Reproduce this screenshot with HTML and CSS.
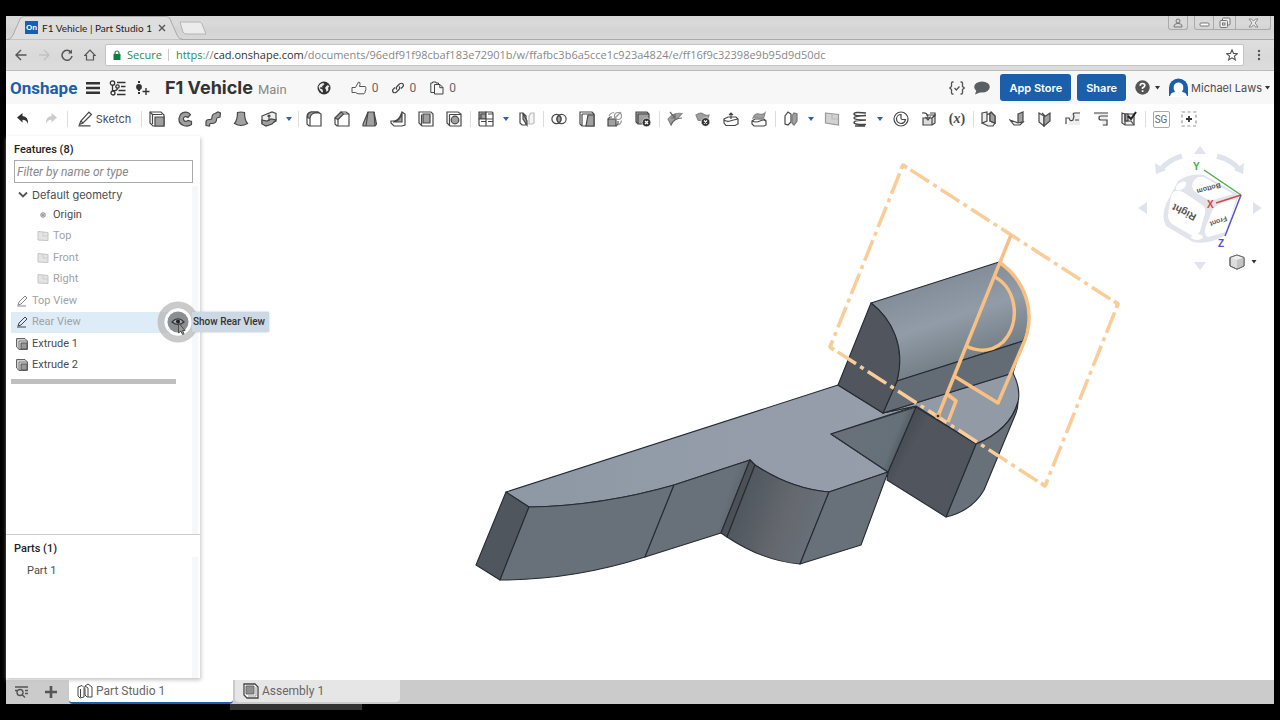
FILE: index.html
```html
<!DOCTYPE html>
<html lang="en">
<head>
<meta charset="utf-8">
<title>F1 Vehicle | Part Studio 1</title>
<link rel="stylesheet" href="styles.css">
</head>
<body>
<div class="window">
  <div class="tabstrip">
    <svg class="tab-shape" width="190" height="24" viewBox="0 0 190 24"><path d="M0 23.500H2Q5 23 7 19L14 3Q15 .5 18 .5H160Q163 .5 164 3L171 19Q173 23.500 177 23.500H190" fill="#dedede" stroke="#aaa"/></svg>
    <div class="browser-tab">
      <span class="favicon">On</span>
      <span class="tab-title">F1 Vehicle | Part Studio 1</span>
      <button class="plain tab-close" aria-label="Close tab"><svg width="8" height="8" viewBox="0 0 8 8"><path d="M1 1L7 7M7 1L1 7" stroke="#555" stroke-width="1.400"/></svg></button>
    </div>
    <button class="plain new-tab" aria-label="New tab"><svg width="28" height="14" viewBox="0 0 28 14"><path d="M1 1H20Q22 1 23 3L27 13H7Q5 13 4 11Z" fill="#ececec" stroke="#b4b4b4"/></svg></button>
    <div class="window-controls">
      <button class="plain wc wc-user" aria-label="Profile"><svg width="10" height="10" viewBox="0 0 10 10" fill="none" stroke="#777"><circle cx="5" cy="3" r="2"/><path d="M1 9V8Q1 6 4 5.500H6Q9 6 9 8V9Z"/></svg></button>
      <div class="wc-group">
        <button class="plain wc wc-min" aria-label="Minimize"><svg width="11" height="10" viewBox="0 0 11 10"><rect x="1" y="5" width="9" height="3" rx="1" fill="#fff" stroke="#777"/></svg></button>
        <button class="plain wc wc-max" aria-label="Restore"><svg width="12" height="12" viewBox="0 0 12 12" fill="#eee" stroke="#777"><rect x="3.500" y="1" width="7.500" height="7" rx="1"/><rect x="1" y="3.500" width="7.500" height="7" rx="1"/><rect x="3.500" y="6" width="2.500" height="2"/></svg></button>
        <button class="plain wc wc-close" aria-label="Close"><svg width="11" height="10" viewBox="0 0 11 10"><path d="M1 1H3.500L5.500 3.200L7.500 1H10L7 5L10 9H7.500L5.500 6.800L3.500 9H1L4 5Z" fill="#eee" stroke="#888"/></svg></button>
      </div>
    </div>
  </div>

  <div class="navbar">
    <button class="plain nav" aria-label="Back"><svg width="12" height="12" viewBox="0 0 12 12" fill="none" stroke="#555" stroke-width="1.400"><path d="M6 1L1 6L6 11M1 6H11.500"/></svg></button>
    <button class="plain nav" aria-label="Forward"><svg width="12" height="12" viewBox="0 0 12 12" fill="none" stroke="#c2c2c2" stroke-width="1.400"><path d="M6 1L11 6L6 11M11 6H1"/></svg></button>
    <button class="plain nav" aria-label="Reload"><svg width="12" height="12" viewBox="0 0 12 12" fill="none" stroke="#555" stroke-width="1.500"><path d="M10 3.200A5 5 0 1 0 11 7"/><path d="M11 .5V4.500H7Z" fill="#555" stroke="none"/></svg></button>
    <button class="plain nav" aria-label="Home"><svg width="12" height="12" viewBox="0 0 12 12" fill="none" stroke="#555" stroke-width="1.200"><path d="M.8 6.500L6 1.200L11.200 6.500H9.500V11H2.500V6.500Z"/></svg></button>
    <div class="address">
      <svg width="8" height="10" viewBox="0 0 8 10"><rect x=".5" y="4" width="7" height="6" rx=".5" fill="#0b8043"/><path d="M2 4V3A2 2 0 0 1 6 3V4" fill="none" stroke="#0b8043" stroke-width="1.200"/></svg>
      <span class="secure">Secure</span>
      <span class="url"><span class="green">https</span>://<span class="dark">cad.onshape.com</span>/documents/96edf91f98cbaf183e72901b/w/ffafbc3b6a5cce1c923a4824/e/ff16f9c32398e9b95d9d50dc</span>
      <button class="plain" aria-label="Bookmark"><svg width="12" height="12" viewBox="0 0 12 12"><path d="M6 .8L7.500 4.400L11.400 4.700L8.400 7.200L9.400 11L6 8.900L2.600 11L3.600 7.200L.6 4.700L4.500 4.400Z" fill="none" stroke="#555" stroke-width="1.100"/></svg></button>
    </div>
    <button class="plain kebab" aria-label="Browser menu"><svg width="4" height="12" viewBox="0 0 4 12" fill="#555"><circle cx="2" cy="2" r="1.200"/><circle cx="2" cy="6" r="1.200"/><circle cx="2" cy="10" r="1.200"/></svg></button>
  </div>

  <header class="header">
    <a class="logo" href="#">Onshape</a>
    <button class="plain hbtn" aria-label="Menu"><svg width="14" height="14" viewBox="0 0 14 14" stroke="#333" stroke-width="2.400"><path d="M0 2.200H14M0 7H14M0 11.800H14"/></svg></button>
    <button class="plain hbtn" aria-label="Versions"><svg width="18" height="16" viewBox="0 0 18 16" fill="none" stroke="#333" stroke-width="1.300"><circle cx="3.500" cy="3" r="2.200"/><circle cx="8.500" cy="6.500" r="1.700"/><circle cx="4" cy="13" r="2"/><path d="M3.500 5V11M4 10.500Q8.500 11 8.500 8.200M8 2.500H16.500M12 6.500H16.500M9.500 10.500H16.500M8 14.500H16.500"/></svg></button>
    <button class="plain hbtn" aria-label="Create version"><svg width="15" height="16" viewBox="0 0 15 16" fill="none" stroke="#333" stroke-width="1.400"><circle cx="4" cy="7" r="2.200" fill="#333"/><path d="M4 1V3M4 9V15" stroke-width="2" stroke-dasharray="2 1"/><path d="M11 8V15M7.500 11.500H14.500"/></svg></button>
    <h1 class="doc-name">F1 Vehicle</h1>
    <span class="branch">Main</span>
    <button class="plain globe" aria-label="Public"><svg width="14" height="14" viewBox="0 0 14 14"><circle cx="7" cy="7" r="6.500" fill="#333"/><path d="M3.500 3L6 2L7.500 3L6 4.500L5 5L5.500 6.500L3.500 6L3 7.500L5.500 8.500L6 11L5 11.500L2.500 8.500L1.500 5.500ZM9.500 5L11 4L12.500 6L11 6.500L11.500 9L9.500 11L9 8.500L8 7Z" fill="#eee"/></svg></button>
    <button class="plain stat stat-like"><svg width="16" height="14" viewBox="0 0 16 14"><path d="M1 6.500H4.500L7.500 1Q9.500 1 9 3.500L8.500 5.500H14Q15.500 6 14.800 7.500Q15.300 9 14.200 10Q14.200 12 13 12.800H7L4.500 11.500H1Z" fill="none" stroke="#555"/></svg><span>0</span></button>
    <button class="plain stat"><svg width="12" height="12" viewBox="0 0 12 12" fill="none" stroke="#444" stroke-width="1.200"><path d="M5 7.500Q3.500 6 5 4.500L7.500 2Q9.500 .5 11 2Q12 3.800 10.500 5L9 6.500M7 4.500Q8.500 6 7 7.500L4.500 10Q2.500 11.500 1 10Q0 8.200 1.500 7L3 5.500"/></svg><span>0</span></button>
    <button class="plain stat"><svg width="14" height="14" viewBox="0 0 14 14" fill="none" stroke="#444"><path d="M4.500 11.500H.8V2H2.500V1H6V2H8.500V3.500M4.500 3.500H10L13 6.500V13H4.500ZM9.800 3.500V6.700H13"/></svg><span>0</span></button>
    <div class="header-right">
      <button class="plain" aria-label="FeatureScript"><svg width="16" height="14" viewBox="0 0 16 14" fill="none" stroke="#555" stroke-width="1.300"><path d="M4.500 1H3.500Q2.500 1 2.500 2.200V5.500L.8 7L2.500 8.500V11.800Q2.500 13 3.500 13H4.500M11.500 1H12.500Q13.500 1 13.500 2.200V5.500L15.200 7L13.500 8.500V11.800Q13.500 13 12.500 13H11.500M5.500 7L7.300 9L10.500 5.500"/></svg></button>
      <button class="plain" aria-label="Comments"><svg width="16" height="14" viewBox="0 0 16 14"><ellipse cx="8" cy="6" rx="7.800" ry="5.500" fill="#5a5f63"/><path d="M2.500 9L1 13.500L7 11Z" fill="#5a5f63"/></svg></button>
      <div class="header-actions">
        <button class="primary">App Store</button>
        <button class="primary">Share</button>
      </div>
      <button class="plain menu" aria-label="Help"><svg width="15" height="15" viewBox="0 0 15 15"><circle cx="7.500" cy="7.500" r="7.200" fill="#555"/><path d="M5.200 5.800Q5.200 3.500 7.500 3.500T9.800 5.500Q9.800 7 7.600 7.800V9M7.600 10.300V12" fill="none" stroke="#fff" stroke-width="1.700"/></svg><svg class="caret" width="5" height="4" viewBox="0 0 5 4"><path d="M0 0H5L2.500 3.500Z"/></svg></button>
      <button class="plain menu user"><svg width="19" height="19" viewBox="0 0 19 19"><path d="M0 18V9.500A9.500 9 0 0 1 19 9.500V18Z" fill="#1b5faa"/><path d="M1 19Q1 14.500 6 14Q4 11 4.800 8Q5.800 4.500 9.500 4.500T14.200 8Q15 11 13 14Q18 14.500 18 19Z" fill="#fff"/></svg><span>Michael Laws</span><svg class="caret" width="5" height="4" viewBox="0 0 5 4"><path d="M0 0H5L2.500 3.500Z"/></svg></button>
    </div>
  </header>

  <div class="toolbar">
    <button class="plain tool" aria-label="Undo"><svg class="ic" viewBox="0 0 16 16"><path d="M2 6.500L7.500 2V5Q13.500 5.500 13 13Q11.500 8.800 7.500 8.800V11.500Z" fill="#333" stroke="none"/></svg></button>
    <button class="plain tool" aria-label="Redo"><svg class="ic" viewBox="0 0 16 16"><path d="M14 6.500L8.500 2V5Q2.500 5.500 3 13Q4.500 8.800 8.500 8.800V11.500Z" fill="#ccc" stroke="none"/></svg></button>
    <i class="sep"></i>
    <button class="plain sketch"><svg class="ic" viewBox="0 0 16 16"><path d="M12 1.200L14.500 3.500L6 12L2.500 13.500L3.800 10ZM3.800 10L6 12M1.500 14.800H13.500" fill="none"/></svg><span>Sketch</span></button>
    <i class="sep"></i>
    <button class="plain tool" aria-label="Extrude"><svg class="ic" viewBox="0 0 16 16"><path d="M1 1H12L15 4V15H4L1 12Z" fill="#fff"/><path d="M3.500 3.500H13M3.500 3.500V13" /><path class="g" d="M6 6H15V15H6Z"/><path d="M1 1L4 4"/></svg></button>
    <button class="plain tool" aria-label="Revolve"><svg class="ic" viewBox="0 0 16 16"><path class="g" d="M13.500 3.500L11 6.500Q8 4.500 6.500 7Q6 10 9 10.500L11 9.500L14.500 10.500V13.500Q11 16 6.500 14.500Q1.500 12.500 2 7.500Q3 1.500 8.500 1.200Q11.500 1 13.500 3.500Z"/></svg></button>
    <button class="plain tool" aria-label="Sweep"><svg class="ic" viewBox="0 0 16 16"><path class="g" d="M1 14.500V11Q1 8.500 4 8.500H5.500Q7 8.500 7 6.500Q7 3 10 2.500L13 1L15.500 2L15 6L12 7Q11.500 7 11.500 9Q11 12.500 7 12.500H5.500Q4.500 12.500 4.500 15Z"/></svg></button>
    <button class="plain tool" aria-label="Loft"><svg class="ic" viewBox="0 0 16 16"><path class="g" d="M4.500 1.500Q8 .5 11.500 1.500Q11.500 9 14.500 12.500Q8 16.500 1.500 12.500Q4.500 9 4.500 1.500Z"/></svg></button>
    <button class="plain tool" aria-label="Thicken"><svg class="ic" viewBox="0 0 16 16"><path d="M1 5L11 1L15 2.500V10L5 14.500L1 12.500Z" fill="#eee"/><path class="g" d="M1 9L6 10L10 8L15 9L11 13L5 15L1 13Z"/><path d="M8 4V10M6.500 5.500L8 4L9.500 5.500"/></svg></button>
    <i class="drop"></i><i class="sep"></i>
    <button class="plain tool" aria-label="Fillet"><svg class="ic" viewBox="0 0 16 16"><path d="M5 1H12L15 3V15H3L1 13V6Q1 1.500 5 1Z" fill="#fff"/><path class="g" d="M5 1H12L13 2H9Q4.500 2.500 4 7.500L1.500 6.500Q1.500 2 5 1Z"/><path d="M4 8V15"/></svg></button>
    <button class="plain tool" aria-label="Chamfer"><svg class="ic" viewBox="0 0 16 16"><path d="M7 1H12L15 3V15H3L1 13V7Z" fill="#fff"/><path class="g" d="M7 1L9.500 3L4 8.500L1 7Z"/><path d="M4 8.500V15M9.500 3H15"/></svg></button>
    <button class="plain tool" aria-label="Draft"><svg class="ic" viewBox="0 0 16 16"><path class="g" d="M6 1H12L14.500 13L13 15H1V13Z"/><path d="M6 1L4 15M12 1L13 15"/></svg></button>
    <button class="plain tool" aria-label="Rib"><svg class="ic" viewBox="0 0 16 16"><path d="M12 1L15 3V14L12 15H4L1 12V10H4Q9 10 12 1Z" fill="#fff"/><path class="g" d="M12 2V11H3Q10 10 12 2Z"/></svg></button>
    <button class="plain tool" aria-label="Shell"><svg class="ic" viewBox="0 0 16 16"><path d="M1 1H13L15 3V15H4L1 12Z" fill="#fff"/><path class="g" d="M5 3H12V12H5Z"/><path d="M3.500 3.500V15"/></svg></button>
    <button class="plain tool" aria-label="Hole"><svg class="ic" viewBox="0 0 16 16"><path d="M1 1H12L15 3V15H4L1 12Z" fill="#fff"/><path d="M3.500 3.500H15M3.500 3.500V15"/><circle class="g" cx="9" cy="9" r="3.800"/></svg></button>
    <i class="sep"></i>
    <button class="plain tool" aria-label="Linear pattern"><svg class="ic" viewBox="0 0 16 16"><path class="g" d="M1 1H8V8H1Z"/><path d="M8 1H14L15 2V8H8ZM1 8H8V15H2L1 14ZM8 8H15V15H8Z" fill="#fff"/><path d="M3 3H8M3 3V8M3 10.500H8M10 10.500H15M10 3H15"/></svg></button>
    <i class="drop"></i>
    <button class="plain tool" aria-label="Mirror"><svg class="ic" viewBox="0 0 16 16"><path d="M1 2H4L7 5V14H3L1 12Z" fill="#fff"/><path class="g" d="M4 2L8 10V14L4 8Z"/><path d="M15 2H12L10 5V13H13L15 12Z" fill="#f4f4f4" stroke="#bbb"/></svg></button>
    <i class="sep"></i>
    <button class="plain tool" aria-label="Boolean"><svg class="ic" viewBox="0 0 16 16"><circle cx="5.500" cy="8" r="4.600" fill="none"/><circle cx="10.500" cy="8" r="4.600" fill="none"/><path class="g" d="M8 4.200A4.600 4.600 0 0 1 8 11.800A4.600 4.600 0 0 1 8 4.200Z"/></svg></button>
    <button class="plain tool" aria-label="Split"><svg class="ic" viewBox="0 0 16 16"><path d="M1 1H13L15 3V15H3L1 13Z" fill="#fff"/><path class="g" d="M9 4H15V15H7Z"/><path d="M3 3H15M3 3V15"/></svg></button>
    <button class="plain tool" aria-label="Transform"><svg class="ic" viewBox="0 0 16 16"><path class="g" d="M1 8H9V15H1Z"/><path d="M1 8L3 6H5M9 15L11 13V10" stroke="#555"/><circle cx="11" cy="5" r="3.500" fill="none" stroke="#999"/><path d="M7 8L14 1M11 14Q14 13 14.500 9.500M2 5Q3 2 7 1.500" stroke="#999"/></svg></button>
    <button class="plain tool" aria-label="Delete part"><svg class="ic" viewBox="0 0 16 16"><path class="g" d="M1 1H12L14 3V13H3L1 11Z"/><path d="M3 3V13M3 3H14"/><circle cx="11.500" cy="11.500" r="4.300" fill="#333" stroke="#fff" stroke-width=".6"/><path d="M10 10L13 13M13 10L10 13" stroke="#fff" stroke-width="1.300"/></svg></button>
    <i class="sep"></i>
    <button class="plain tool" aria-label="Modify fillet"><svg class="ic" viewBox="0 0 16 16"><path class="l" d="M1 8Q6 1 15 2.500L11 7Q6 8 4 14Z"/><path d="M3 1L8 7M8 3V7H4M4 14Q7 7 15 7" stroke="#666"/></svg></button>
    <button class="plain tool" aria-label="Delete face"><svg class="ic" viewBox="0 0 16 16"><path class="l" d="M1 4Q6 1 8 3T14 4L12 10Q9 8 7 9T3 9Z"/><circle cx="10.500" cy="11" r="4.300" fill="#333" stroke="#fff" stroke-width=".6"/><path d="M9 9.500L12 12.500M12 9.500L9 12.500" stroke="#fff" stroke-width="1.300"/></svg></button>
    <button class="plain tool" aria-label="Move face"><svg class="ic" viewBox="0 0 16 16"><path d="M1 8L5 6H13L15 8V13L12 14.500H3L1 12Z" fill="#fff"/><path d="M1 9Q4 11 7 10T15 8M8 8V2M6 4L8 2L10 4"/></svg></button>
    <button class="plain tool" aria-label="Replace face"><svg class="ic" viewBox="0 0 16 16"><path d="M1 10L4 8H13L15 10V14L13 15H3L1 13Z" fill="#fff"/><path class="l" d="M2 7Q4 2 8 3T14 2L13 6Q10 8 7 7T2 7Z"/><path d="M1 10Q5 12 9 10T15 10"/></svg></button>
    <i class="sep"></i>
    <button class="plain tool" aria-label="Offset surface"><svg class="ic" viewBox="0 0 16 16"><path d="M2 13V5L5 1L8 3V11L5 14Z" fill="#fff"/><path class="g" d="M9 12V5L11 2L14 3V10L11 14Z" stroke="#777"/></svg></button>
    <i class="drop"></i>
    <button class="plain tool" aria-label="Plane"><svg class="ic" viewBox="0 0 16 16"><path d="M1.500 2L14.500 3.500V14L1.500 12Z" fill="#d2d2d2" stroke="#999"/><path d="M8 3V8H14" fill="none" stroke="#bbb"/></svg></button>
    <button class="plain tool" aria-label="Helix"><svg class="ic" viewBox="0 0 16 16"><path d="M14 2Q2 .5 2 3T14 4.500M14 4.500Q2 5 2 7T14 9M14 9Q2 9 2 11.500T14 13.500M3 15H13" fill="none" stroke-width="1.500"/></svg></button>
    <i class="drop"></i>
    <button class="plain tool" aria-label="Fit spline"><svg class="ic" viewBox="0 0 16 16"><circle cx="8" cy="8" r="7" fill="#fff"/><path d="M8 3.500V7.500Q8.500 8.500 9.500 8.500H12.500Q11.500 12.500 8 12.500A4.500 4.500 0 0 1 8 3.500Z" fill="none"/></svg></button>
    <button class="plain tool" aria-label="Derived"><svg class="ic" viewBox="0 0 16 16"><path d="M2 7H11V14H2ZM11 7L14 4V12L11 14M5 4H14" fill="#ddd"/><path d="M1 2Q7 1 7 7M4.500 6L7 9L9.500 5.500M9 2H14V5"/></svg></button>
    <button class="plain tool variable" aria-label="Variable">(<em>x</em>)</button>
    <i class="sep"></i>
    <button class="plain tool" aria-label="Sheet metal model"><svg class="ic" viewBox="0 0 16 16"><path d="M1 2L6 1V10L1 12ZM6 4L9 2V10L14 12V5L10 1M1 12L7 15H12L14 12" fill="#eee"/><path class="g" d="M9 3L10 1L14 5V12L9 10Z"/></svg></button>
    <button class="plain tool" aria-label="Flange"><svg class="ic" viewBox="0 0 16 16"><path class="g" d="M9 3L14 1V11L9 12Z"/><path d="M1 9L9 12L14 11L11 14H5Z" fill="#eee"/></svg></button>
    <button class="plain tool" aria-label="Bend"><svg class="ic" viewBox="0 0 16 16"><path d="M2 2L7 5V15L2 11Z" fill="#eee"/><path class="g" d="M7 6L13 2V10L7 15Z"/><path d="M5 2L8 5" /></svg></button>
    <button class="plain tool" aria-label="Tab"><svg class="ic" viewBox="0 0 16 16"><path d="M8 1H15V14H4V7Z" fill="#eee" stroke="none"/><path d="M1 13V7H4Q5 11 8 9L9 5Q7 2 10 2H15M10 9H14" fill="none"/></svg></button>
    <button class="plain tool" aria-label="Joint"><svg class="ic" viewBox="0 0 16 16"><path d="M1 1H15V15H9V9H5V4H1Z" fill="#eee" stroke="none"/><path d="M1 2H15M15 5H8Q6 5 6 7T8 9H14V14H10" fill="none"/></svg></button>
    <button class="plain tool" aria-label="Finish sheet metal"><svg class="ic" viewBox="0 0 16 16"><path d="M1 2L4 3H13V14H4L1 12Z" fill="#eee"/><path class="g" d="M4 3H7V10H4Z"/><path d="M4 14V3M4 10H10L13 14"/><path d="M7 5L10 8L15 1" stroke="#222" stroke-width="2"/></svg></button>
    <i class="sep"></i>
    <button class="plain tool"><span class="sg">SG</span></button>
    <button class="plain tool" aria-label="Add custom feature"><svg class="ic" viewBox="0 0 16 16"><rect x="1" y="1" width="14" height="14" fill="none" stroke="#999" stroke-dasharray="3 2.600"/><path d="M8 5V11M5 8H11" stroke="#333" stroke-width="1.800"/></svg></button>
  </div>

  <main class="workspace">
    <aside class="panel">
      <section class="features">
        <h2><label for="filter">Features (8)</label></h2>
        <input id="filter" class="filter" type="text" placeholder="Filter by name or type">
        <div class="scroll">
          <button class="plain group"><svg width="10" height="8" viewBox="0 0 10 8"><path d="M1 1.500L5 5.500L9 1.500" fill="none" stroke="#555" stroke-width="1.800"/></svg>Default geometry</button>
          <ul class="tree">
            <li class="nested"><svg class="fi" viewBox="0 0 12 12"><circle cx="6" cy="6" r="2.300" fill="#ccc" stroke="#999"/><circle cx="6" cy="6" r=".8" fill="#666"/></svg>Origin</li>
            <li class="nested dim"><svg class="fi" viewBox="0 0 12 12"><path d="M1 1.500L11 2.500V10.500L1 10Z" fill="#e4e4e4" stroke="#c4c4c4"/><path d="M6 2V6H11" fill="none" stroke="#ccc"/></svg>Top</li>
            <li class="nested dim"><svg class="fi" viewBox="0 0 12 12"><path d="M1 1.500L11 2.500V10.500L1 10Z" fill="#e4e4e4" stroke="#c4c4c4"/><path d="M6 2V6H11" fill="none" stroke="#ccc"/></svg>Front</li>
            <li class="nested dim"><svg class="fi" viewBox="0 0 12 12"><path d="M1 1.500L11 2.500V10.500L1 10Z" fill="#e4e4e4" stroke="#c4c4c4"/><path d="M6 2V6H11" fill="none" stroke="#ccc"/></svg>Right</li>
            <li class="dim"><svg class="fi" viewBox="0 0 12 12"><path d="M9 1L11 3L5 9L2 10L3 7ZM1 11H10" fill="none" stroke="#888"/></svg>Top View</li>
            <li class="dim selected"><svg class="fi" viewBox="0 0 12 12"><path d="M9 1L11 3L5 9L2 10L3 7ZM1 11H10" fill="none" stroke="#444"/></svg>Rear View
              <button class="plain show" aria-label="Show Rear View"><svg width="42" height="42" viewBox="0 0 42 42"><circle cx="21" cy="21" r="17" fill="none" stroke="#b8b8b8" stroke-opacity=".75" stroke-width="7"/><circle cx="21" cy="21" r="12" fill="none" stroke="#fff" stroke-width="3"/><circle cx="21" cy="21" r="10.500" fill="#8b8f92"/><path d="M15 21Q21 14.500 27 21Q21 26 15 21Z" fill="#aaa" stroke="#333" stroke-width="1.200"/><circle cx="21" cy="20.500" r="2" fill="#222"/><path d="M21.500 22V32L23.800 30L25.500 33.500L27 32.800L25.500 29.500H28Z" fill="#999" stroke="#444" stroke-width=".9"/></svg></button>
              <span class="tooltip" role="tooltip">Show Rear View</span></li>
            <li><svg class="fi" viewBox="0 0 12 12"><path d="M.6.6H9L11.400 3V11.400H3L.6 9Z" fill="#ddd" stroke="#555"/><path d="M3 3H11M3 3V11" stroke="#777"/><path d="M5 5H11V11H5Z" fill="#999" stroke="#555"/></svg>Extrude 1</li>
            <li><svg class="fi" viewBox="0 0 12 12"><path d="M.6.6H9L11.400 3V11.400H3L.6 9Z" fill="#ddd" stroke="#555"/><path d="M3 3H11M3 3V11" stroke="#777"/><path d="M5 5H11V11H5Z" fill="#999" stroke="#555"/></svg>Extrude 2</li>
          </ul>
          <div class="rollback"></div>
        </div>
      </section>
      <section class="parts">
        <h2>Parts (1)</h2>
        <div class="scroll"><ul class="part-list"><li>Part 1</li></ul></div>
      </section>
    </aside>

    <div class="viewport">
      <svg class="model" viewBox="200 136 1074 544" preserveAspectRatio="xMidYMid meet">
        <defs>
          <linearGradient id="gTop" x1="0" y1="0" x2="1" y2="0"><stop offset="0" stop-color="#8d98a4"/><stop offset=".5" stop-color="#949ca9"/><stop offset="1" stop-color="#969dab"/></linearGradient>
          <linearGradient id="gCyl" gradientUnits="userSpaceOnUse" x1="935" y1="283" x2="962" y2="364"><stop offset="0" stop-color="#838e99"/><stop offset=".45" stop-color="#929ca8"/><stop offset="1" stop-color="#737d85"/></linearGradient>
          <linearGradient id="gConcave" gradientUnits="userSpaceOnUse" x1="740" y1="500" x2="818" y2="528"><stop offset="0" stop-color="#50575f"/><stop offset=".6" stop-color="#65686f"/><stop offset="1" stop-color="#687079"/></linearGradient>
          <linearGradient id="gSide" gradientUnits="userSpaceOnUse" x1="650" y1="510" x2="738" y2="538"><stop offset="0" stop-color="#687179"/><stop offset=".75" stop-color="#687179"/><stop offset="1" stop-color="#535b63"/></linearGradient>
          <linearGradient id="gDark" gradientUnits="userSpaceOnUse" x1="900" y1="440" x2="965" y2="475"><stop offset="0" stop-color="#484d54"/><stop offset=".2" stop-color="#50555e"/><stop offset="1" stop-color="#50555e"/></linearGradient>
          <linearGradient id="gNotch" gradientUnits="userSpaceOnUse" x1="860" y1="432" x2="905" y2="450"><stop offset="0" stop-color="#687179"/><stop offset=".7" stop-color="#657078"/><stop offset="1" stop-color="#4c535a"/></linearGradient>
        </defs>
        <g stroke="#262b31" stroke-width="1.100" stroke-linejoin="round">
          <path d="M506 492L838 385L883 413L916 406L831 434L888 472L829 492Q791 489 755 465L750 460L674 485Q601 506 529 507Z" fill="url(#gTop)"/>
          <path d="M883 413L1013 373Q1021 389 1018 402Q1010 430 976 444L916 406Z" fill="#929aa6"/>
          <path d="M976 444Q1010 430 1018 402Q1018 408 1016 413L984 490Q972 511 946 517Z" fill="#687179"/>
          <path d="M916 407L976 444L946 517L887 480L888 472Z" fill="url(#gDark)"/>
          <path d="M831 434L916 407L888 472Z" fill="url(#gNotch)"/>
          <path d="M506 492L529 507L500 580L476 565Z" fill="#50565e"/>
          <path d="M529 507Q601 506 674 485L645 557Q573 580 500 580Z" fill="#687179"/>
          <path d="M674 485L750 460L721 533L645 557Z" fill="url(#gSide)"/>
          <path d="M750 460L755 465L727 537L721 533Z" fill="#4b5157"/>
          <path d="M755 465Q791 489 829 492L800 564Q763 561 727 537Z" fill="url(#gConcave)"/>
          <path d="M829 492L888 472L861 545L800 564Z" fill="#687179"/>
          <path d="M871 303L999 262C1021 277 1037 309 1023 341L897 381C904 347 892 319 871 303Z" fill="url(#gCyl)"/>
          <path d="M897 381L1023 341L1013 373L883 413Z" fill="#636c74"/>
          <path d="M871 303C892 319 906 347 897 381L883 413L838 385Z" fill="#50555e"/>
        </g>
        <g fill="none" stroke="#f9cc98" stroke-width="3.500">
          <path d="M903 165L1118 304M1118 304L1045 486M830 347L1045 486M903 165L830 347" stroke-dasharray="4 5 22 5"/>
          <path d="M901 169L903 165L907 168M1114 301L1118 304L1116 308M1041 483L1045 486L1047 482M832 342L830 347L834 350" stroke-linejoin="round"/>
        </g>
        <g fill="none" stroke="#f8c083" stroke-width="3.500" stroke-linejoin="round">
          <path d="M1011 235L938 416"/>
          <path d="M999 262C1025 280 1038 313 1022 347L998 403L954 376M995 277C1017 289 1021 323 1003 342Q987 356 966 346M947 394L956 401L948 422"/>
        </g>
        <circle cx="938" cy="416" r="3" fill="#efb478"/><circle cx="938" cy="416" r="1.300" fill="#333"/>
      </svg>

      <div class="view-cube">
        <svg width="130" height="132" viewBox="1134 142 130 132">
          <g fill="#dfe3eb"><path d="M1194 154L1200 146L1206 154ZM1194 262L1200 270L1206 262ZM1147 202L1138 208L1147 214ZM1253 202L1262 208L1253 214Z"/><path d="M1155 163L1156 174L1166 170ZM1244 163L1243 174L1234 170Z"/></g>
          <path d="M1160 170Q1168 160 1182 156M1240 170Q1232 160 1217 156" fill="none" stroke="#dfe3eb" stroke-width="5"/>
          <path d="M1178 181Q1190 173 1204 175L1239 195L1224 236Q1208 245 1193 242L1166 226Q1161 216 1166 204Z" fill="#e1e4eb"/>
          <g fill="#fff"><path d="M1176 191Q1173 191 1171 196L1168 215Q1168 221 1172 224L1191 235Q1198 236 1200 231L1205 213Q1206 207 1201 204L1183 192Q1179 190 1176 191Z"/><path d="M1198 177L1204 177L1233 194L1213 200Q1205 200 1193 190Q1190 182 1198 177Z"/><path d="M1236 199L1226 232L1208 237Q1203 235 1206 226L1212 211Q1216 203 1236 199Z"/><ellipse cx="1181" cy="186" rx="6" ry="3.500" transform="rotate(-35 1181 186)"/><ellipse cx="1197" cy="237" rx="6" ry="3"/></g>
          <g class="cube-text"><text transform="translate(1197 215) rotate(207)">Right</text><text class="small" transform="translate(1220 183) rotate(165)">Bottom</text><text class="small" transform="translate(1226 216) rotate(160)">Front</text></g>
          <path d="M1241 195L1204 170" stroke="#4daf50" stroke-width="1.500"/><path d="M1241 195L1216 203" stroke="#d04848" stroke-width="1.500"/><path d="M1241 195L1225 236" stroke="#5552c8" stroke-width="1.500"/>
          <g class="axis"><text x="1193" y="170" fill="#43ad46">Y</text><text x="1207" y="208" fill="#d84343">X</text><text x="1218" y="247" fill="#554fd0">Z</text></g>
        </svg>
        <button class="plain menu view-menu" aria-label="View options"><svg width="16" height="16" viewBox="0 0 16 16" stroke="#666"><path d="M8 1L15 3.500V12L8 15.200L1 12V3.500Z" fill="#ddd"/><path d="M1 3.500L8 6L15 3.500L8 1Z" fill="#eee" stroke="none"/><path d="M8 6V15L15 12V3.500Z" fill="#c4c4c4" stroke="none"/><path d="M8 1L15 3.500V12L8 15.200L1 12V3.500Z" fill="none"/></svg><svg class="caret" width="6" height="4" viewBox="0 0 5 4"><path d="M0 0H5L2.500 3.500Z"/></svg></button>
      </div>
    </div>
  </main>

  <nav class="doc-tabs">
    <button class="plain doc-tool" aria-label="Tab manager"><svg width="15" height="14" viewBox="0 0 15 14" fill="none" stroke="#555" stroke-width="1.400"><path d="M1 2H14M11 5.500H14M11 8.500H14"/><circle cx="6" cy="7.500" r="3"/><path d="M8 9.500L11 12.500M1 5.500H3"/></svg></button>
    <button class="plain doc-tool" aria-label="Add tab"><svg width="12" height="12" viewBox="0 0 12 12"><path d="M6 0V12M0 6H12" stroke="#555" stroke-width="2.600"/></svg></button>
    <a class="doc-tab active" href="#"><svg width="16" height="16" viewBox="0 0 16 16" fill="#fff" stroke="#444"><path d="M1 4L5 2.500L7 4.500V14L3 15L1 13Z"/><path d="M3.500 6V14"/><path d="M8 3L11 1L15 4V14H10L8 12Z"/><path d="M8 3L11 5V14"/></svg>Part Studio 1</a>
    <a class="doc-tab" href="#"><svg width="16" height="16" viewBox="0 0 16 16"><path d="M1 1H12L15 4V15H4L1 12Z" fill="#fff" stroke="#444" stroke-width="1.300"/><path d="M3 3H11V11H3Z" fill="#8f8f8f" stroke="#666"/><path d="M13 4V13H5" fill="none" stroke="#999"/></svg>Assembly 1</a>
  </nav>
</div>
<div class="player"><div class="player-bar"></div></div>
</body>
</html>
```
FILE: styles.css
```css
* { box-sizing: border-box; }

body {
  margin: 0;
  height: 100vh;
  padding: 16px 6px 0;
  display: flex;
  flex-direction: column;
  background: #000;
  color: #4c4c4c;
  font: 11px/16px Roboto, "Liberation Sans", sans-serif;
  overflow: hidden;
}

button, input { font: inherit; color: inherit; }
h1, h2, ul { margin: 0; padding: 0; }
ul { list-style: none; }
a { color: inherit; text-decoration: none; }
svg { display: block; flex: none; }

.plain {
  display: flex;
  align-items: center;
  justify-content: center;
  padding: 0;
  border: 0;
  background: none;
}

.window {
  flex: 1;
  min-height: 0;
  display: flex;
  flex-direction: column;
  background: #fff;
}

/* Browser frame */
.tabstrip {
  position: relative;
  flex: none;
  display: flex;
  height: 24px;
  padding-left: 19px;
  border-bottom: 1px solid #aaa;
  background: linear-gradient(#d6d6d6, #dadada 30%, #d3d3d3 60%, #d8d8d8);
}
.tab-shape { position: absolute; left: 0; top: 0; }
.browser-tab { position: relative; display: flex; align-items: center; width: 152px; }
.favicon {
  width: 13px;
  height: 13px;
  background: #1b5faa;
  color: #fff;
  font: bold 8px/13px "Liberation Sans", sans-serif;
  text-align: center;
}
.tab-title { margin-left: 4px; font: 10px/16px Lato, sans-serif; white-space: nowrap; color: #222; }
.tab-close { margin-left: auto; margin-right: 11px; }
.new-tab { position: relative; margin-left: 2px; }
.window-controls { display: flex; gap: 6px; margin-left: auto; padding-right: 3px; }
.wc { height: 14px; border-right: 1px solid #aaa; }
.wc-user { width: 20px; border: 1px solid #aaa; border-top: 0; border-radius: 0 0 3px 3px; }
.wc-group { display: flex; align-self: flex-start; border: 1px solid #aaa; border-top: 0; border-radius: 0 0 3px 3px; }
.wc-group .wc { height: 13px; }
.wc-min { width: 19px; }
.wc-max { width: 22px; }
.wc-close { width: 34px; border-right: 0; }

.navbar {
  flex: none;
  display: flex;
  align-items: center;
  height: 31px;
  padding: 0 13px 1px 3px;
  border-bottom: 1px solid #bbb;
  background: linear-gradient(#dedede, #d9d9d9 60%, #dddddd);
  font-family: "Open Sans", "Noto Sans", sans-serif;
}
.nav { width: 23px; }
.address {
  flex: 1;
  min-width: 0;
  display: flex;
  align-items: center;
  height: 22px;
  margin-left: 4px;
  padding: 0 5px 0 7px;
  border: 1px solid #c4c4c4;
  border-radius: 2px;
  background: #fff;
}
.secure { margin-left: 6px; padding-right: 6px; border-right: 1px solid #ccc; line-height: 12px; color: #2a8a55; }
.url { flex: 1; margin-left: 7px; color: #888; white-space: nowrap; overflow: hidden; }
.green { color: #2a8a55; }
.dark { color: #333; }
.kebab { margin-left: 13px; }

/* Document header */
.header {
  flex: none;
  display: flex;
  align-items: center;
  height: 33px;
  padding: 0 4px;
  background: #f7f7f7;
}
.logo { width: 70px; font: bold 17px/24px Roboto, sans-serif; color: #1b5faa; }
.hbtn { width: 25px; }
.doc-name { margin-left: 6px; padding-left: 4px; font: bold 18px/24px Inter, sans-serif; color: #333; white-space: nowrap; }
.branch { margin-left: 5px; padding-top: 4px; font-size: 13px; color: #888; }
.globe { margin-left: 30px; }
.stat { gap: 5px; margin-left: 14px; font-size: 12px; color: #666; }
.stat-like { margin-left: 20px; }
.header-right { display: flex; align-items: center; gap: 9px; margin-left: auto; }
.header-actions { display: flex; gap: 6px; margin-left: 1px; }
.primary {
  height: 27px;
  padding: 0 9px;
  border: 0;
  border-radius: 3px;
  background: #1b5faa;
  color: #fff;
  font: 600 11px/16px Inter, sans-serif;
}
.menu { gap: 5px; }
.caret { fill: #333; }
.user { font: 11px/16px Inter, sans-serif; white-space: nowrap; }
.user { gap: 3px; }

/* Feature toolbar */
.toolbar {
  flex: none;
  display: flex;
  align-items: center;
  height: 32px;
  padding: 0 0 2px 3px;
}
.tool { flex: none; width: 28px; height: 28px; }
.ic { width: 16px; height: 16px; fill: none; stroke: #484848; stroke-width: 1.2; }
.g { fill: #a0a0a0; }
.l { fill: #a0a0a0; stroke: #888; }
.sep { flex: none; width: 1px; height: 16px; margin: 0 1px 0 2px; background: #ddd; }
.drop { flex: none; width: 13px; height: 4px; background: #2a63b0; clip-path: polygon(3px 0, 9px 0, 6px 4px); }
.sketch { width: 70px; gap: 3px; font: 11px/16px Inter, sans-serif; }
.variable { font: bold 14px/16px "Liberation Serif", serif; }
.sg { width: 17px; border: 1px solid #aaa; border-radius: 2px; font-size: 10px; line-height: 15px; color: #666; }

/* Side panel */
.workspace { flex: 1; min-height: 0; display: flex; }
.panel {
  position: relative;
  z-index: 1;
  flex: none;
  width: 194px;
  margin-bottom: 2px;
  display: flex;
  flex-direction: column;
  background: #fff;
  box-shadow: 1px 2px 4px #c4c4c4;
}
.panel h2 { padding: 0 8px; font: 500 11px/16px Roboto, sans-serif; color: #222; }
.features { flex: 1; min-height: 0; display: flex; flex-direction: column; padding-top: 6px; }
.filter {
  height: 23px;
  margin: 2px 7px 3px 8px;
  padding: 0 2px;
  border: 1px solid #aaa;
  background: #fff;
  font-style: italic;
  font-size: 12px;
}
.filter::placeholder { color: #888; opacity: 1; }
.scroll { flex: 1; margin-right: 2px; padding-left: 5px; border-right: 6px solid #f6f7f9; }
.group { gap: 4px; height: 18px; padding-left: 7px; font: 11px/16px Inter, sans-serif; }
.tree { display: grid; grid-template-rows: repeat(8, 1fr); height: 172px; }
.tree li { position: relative; display: flex; align-items: center; gap: 4px; padding-left: 5px; }
.tree .nested { padding-left: 26px; }
.fi { width: 12px; height: 12px; }
.tree .dim { color: #a2a2a2; }
.tree .selected { margin-right: 14px; background: #deecf8; }
.show { position: absolute; right: -21px; z-index: 2; }
.tooltip {
  position: absolute;
  z-index: 3;
  left: 181px;
  padding: 2px 4px 2px 1px;
  background: #ccd8e4;
  box-shadow: 0 0 2px #bcc8d4;
  color: #333;
  font: 500 10px/16px Roboto, sans-serif;
  white-space: nowrap;
}
.rollback { width: 165px; height: 5px; margin-top: 3px; background: #bfbfbf; }
.parts { display: flex; flex-direction: column; height: 144px; padding-top: 6px; border-top: 1px solid #ccc; }
.part-list { padding: 6px 0 0 16px; }

/* Modelling area */
.viewport { position: relative; flex: 1; min-width: 0; }
.model { width: 100%; height: 100%; }
.view-cube { position: absolute; top: 6px; right: 10px; }
.cube-text { font: bold 10px "Liberation Sans", sans-serif; fill: #555; }
.cube-text .small { font-size: 7px; }
.axis { font: bold 10px "Liberation Sans", sans-serif; }
.view-menu { position: absolute; right: 7px; bottom: 4px; gap: 6px; }

/* Document tabs */
.doc-tabs { flex: none; display: flex; height: 24px; background: #cbcbcb; font-size: 12px; }
.doc-tool { width: 30px; }
.doc-tab {
  display: flex;
  align-items: center;
  gap: 3px;
  width: 165px;
  height: 22px;
  margin-right: 2px;
  padding-left: 8px;
  border-radius: 0 0 4px 4px;
  background: #e6e6e6;
  color: #666;
}
.doc-tab.active { height: 24px; width: 164px; margin-left: 3px; background: #fff; border-bottom: 2px solid #1b5faa; }

/* Player edge below the window */
.player { flex: none; height: 16px; padding-left: 224px; }
.player-bar { width: 132px; height: 6px; background: #333; }
```
